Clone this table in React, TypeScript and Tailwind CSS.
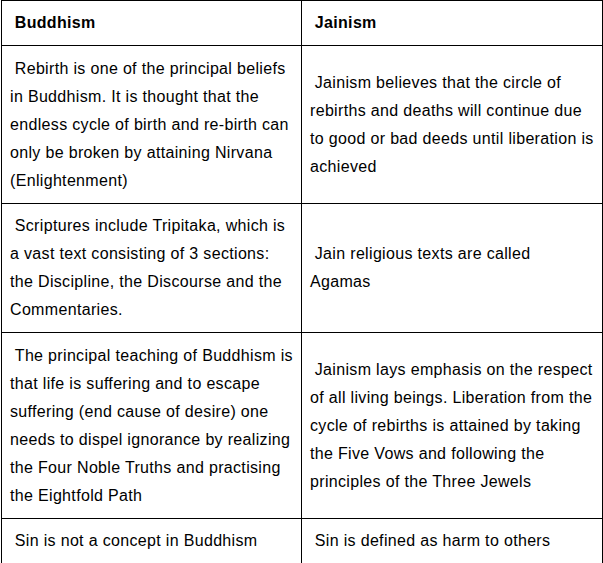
import React from "react";

const rows: Array<{ left: string; right: string; h: string }> = [
  {
    left: " Rebirth is one of the principal beliefs in Buddhism. It is thought that the endless cycle of birth and re-birth can only be broken by attaining Nirvana (Enlightenment)",
    right: " Jainism believes that the circle of rebirths and deaths will continue due to good or bad deeds until liberation is achieved",
    h: "h-[158px]",
  },
  {
    left: " Scriptures include Tripitaka, which is a vast text consisting of 3 sections: the Discipline, the Discourse and the Commentaries.",
    right: " Jain religious texts are called Agamas",
    h: "h-[129px]",
  },
  {
    left: " The principal teaching of Buddhism is that life is suffering and to escape suffering (end cause of desire) one needs to dispel ignorance by realizing the Four Noble Truths and practising the Eightfold Path",
    right: " Jainism lays emphasis on the respect of all living beings. Liberation from the cycle of rebirths is attained by taking the Five Vows and following the principles of the Three Jewels",
    h: "h-[186px]",
  },
  {
    left: " Sin is not a concept in Buddhism",
    right: " Sin is defined as harm to others",
    h: "h-[45px]",
  },
];

export default function App() {
  return (
    <div className="min-h-[563px] w-[603px] bg-white pl-px font-['Liberation_Sans',Arial,sans-serif] text-[16px] leading-[28px] tracking-[0.33px] text-black">
      <table className="w-[602px] table-fixed border-collapse">
        <colgroup>
          <col className="w-[300px]" />
          <col />
        </colgroup>
        <thead>
          <tr className="h-[44px]">
            <th className="whitespace-pre-wrap border border-black px-2 py-2 text-left align-middle font-bold">
              {" Buddhism"}
            </th>
            <th className="whitespace-pre-wrap border border-black px-2 py-2 text-left align-middle font-bold">
              {" Jainism"}
            </th>
          </tr>
        </thead>
        <tbody>
          {rows.map((r, i) => (
            <tr key={i} className={r.h}>
              <td className="whitespace-pre-wrap border border-black px-2 py-2 align-middle">{r.left}</td>
              <td className="whitespace-pre-wrap border border-black px-2 py-2 align-middle">{r.right}</td>
            </tr>
          ))}
        </tbody>
      </table>
    </div>
  );
}
